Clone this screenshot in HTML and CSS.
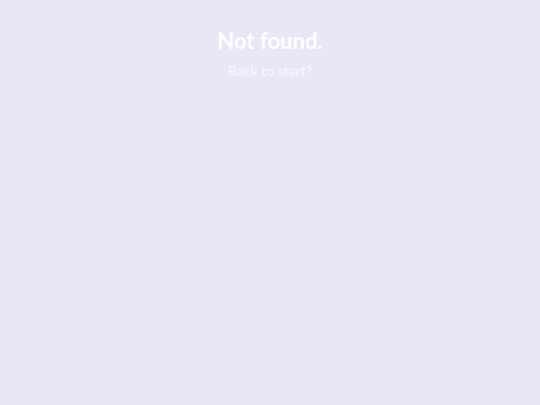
FILE: index.html
```html
<!DOCTYPE html>
<html>
<head>
<meta charset="utf-8">
<link rel="stylesheet" href="styles.css">
</head>
<body>
<main class="page">
  <h1 class="title">Not found.</h1>
  <a class="back" href="#">Back to start?</a>
</main>
</body>
</html>
```
FILE: styles.css
```css
html, body {
  margin: 0;
  padding: 0;
  height: 100%;
  background: #e9e6f5;
}
.page {
  display: flex;
  flex-direction: column;
  align-items: center;
  padding-top: 28px;
  font-family: Lato, "Open Sans", sans-serif;
}
.title {
  margin: 0;
  font-size: 22px;
  font-weight: 700;
  color: #ffffff;
  line-height: 26px;
}
.back {
  margin-top: 8px;
  font-size: 14px;
  color: rgba(255, 255, 255, 0.75);
  text-decoration: none;
  line-height: 18px;
}
```
